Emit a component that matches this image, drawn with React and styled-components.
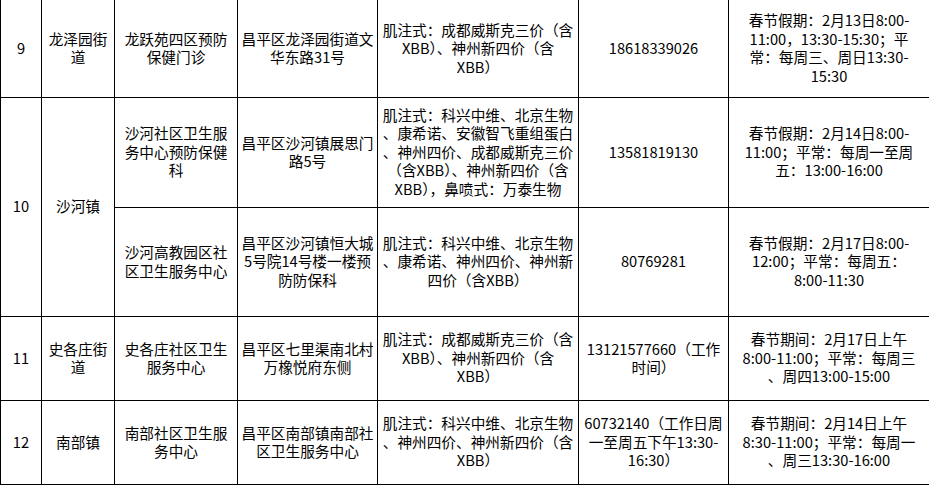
import React from 'react';
import styled, { createGlobalStyle } from "styled-components";

const GlobalStyle = createGlobalStyle`
    html, body {
        margin: 0;
        padding: 0;
        background: #fff;
    }
`;

const columns = [41, 73, 123, 140, 201, 150, 201];

// each row: number, street (with rowSpan), and the site cells
const rows = [
    {
        height: 97,
        no: "9",
        street: ["龙泽园街", "道"],
        span: 1,
        site: {
            name: ["龙跃苑四区预防", "保健门诊"],
            address: ["昌平区龙泽园街道文", "华东路31号"],
            vaccine: ["肌注式：成都威斯克三价（含", "XBB）、神州新四价（含", "XBB）"],
            phone: ["18618339026"],
            time: ["春节假期：2月13日8:00-", "11:00，13:30-15:30；平", "常：每周三、周日13:30-", "15:30"],
        },
    },
    {
        height: 110,
        no: "10",
        street: ["沙河镇"],
        span: 2,
        site: {
            name: ["沙河社区卫生服", "务中心预防保健", "科"],
            address: ["昌平区沙河镇展思门", "路5号"],
            vaccine: ["肌注式：科兴中维、北京生物", "、康希诺、安徽智飞重组蛋白", "、神州四价、成都威斯克三价", "（含XBB）、神州新四价（含", "XBB），鼻喷式：万泰生物"],
            phone: ["13581819130"],
            time: ["春节假期：2月14日8:00-", "11:00；平常：每周一至周", "五：13:00-16:00"],
        },
    },
    {
        height: 109,
        site: {
            name: ["沙河高教园区社", "区卫生服务中心"],
            address: ["昌平区沙河镇恒大城", "5号院14号楼一楼预", "防防保科"],
            vaccine: ["肌注式：科兴中维、北京生物", "、康希诺、神州四价、神州新", "四价（含XBB）"],
            phone: ["80769281"],
            time: ["春节假期：2月17日8:00-", "12:00；平常：每周五：", "8:00-11:30"],
        },
    },
    {
        height: 84,
        no: "11",
        street: ["史各庄街", "道"],
        span: 1,
        site: {
            name: ["史各庄社区卫生", "服务中心"],
            address: ["昌平区七里渠南北村", "万橡悦府东侧"],
            vaccine: ["肌注式：成都威斯克三价（含", "XBB）、神州新四价（含", "XBB）"],
            phone: ["13121577660（工作", "时间）"],
            time: ["春节期间：2月17日上午", "8:00-11:00；平常：每周三", "、周四13:00-15:00"],
        },
    },
    {
        height: 84,
        no: "12",
        street: ["南部镇"],
        span: 1,
        site: {
            name: ["南部社区卫生服", "务中心"],
            address: ["昌平区南部镇南部社", "区卫生服务中心"],
            vaccine: ["肌注式：科兴中维、北京生物", "、神州四价、神州新四价（含", "XBB）"],
            phone: ["60732140（工作日周", "一至周五下午13:30-", "16:30）"],
            time: ["春节期间：2月14日上午", "8:30-11:00；平常：每周一", "、周三13:30-16:00"],
        },
    },
];

const Lines = ({ lines }) => (
    <>
        {lines.map((line, i) => (
            <React.Fragment key={i}>
                {i > 0 && <br />}
                {line}
            </React.Fragment>
        ))}
    </>
);

const App = () => {
    return (
        <>
            <GlobalStyle />
            <Table>
                <colgroup>
                    {columns.map((w, i) => <Col key={i} $w={w} />)}
                </colgroup>
                <tbody>
                    {rows.map((row, i) => (
                        <Row key={i} $h={row.height}>
                            {row.no && (
                                <Cell rowSpan={row.span} $top={i === 0}>{row.no}</Cell>
                            )}
                            {row.street && (
                                <Cell rowSpan={row.span} $top={i === 0}><Lines lines={row.street} /></Cell>
                            )}
                            <Cell $top={i === 0}><Lines lines={row.site.name} /></Cell>
                            <Cell $top={i === 0}><Lines lines={row.site.address} /></Cell>
                            <Cell $top={i === 0}><Lines lines={row.site.vaccine} /></Cell>
                            <Cell $top={i === 0}><Lines lines={row.site.phone} /></Cell>
                            <Cell $top={i === 0}><Lines lines={row.site.time} /></Cell>
                        </Row>
                    ))}
                </tbody>
            </Table>
        </>
    );
};

const Table = styled.table`
    border-collapse: collapse;
    table-layout: fixed;
    width: 929px;
    font-family: "Noto Sans CJK SC", "Liberation Sans", sans-serif;
    font-size: 14.67px;
    line-height: 18.5px;
    color: #000;
`;

const Col = styled.col`
    width: ${(p) => p.$w}px;
`;

const Row = styled.tr`
    height: ${(p) => p.$h}px;
`;

const Cell = styled.td`
    border: 1px solid #000;
    border-top: ${(p) => (p.$top ? "none" : "1px solid #000")};
    padding: 0 1px;
    text-align: center;
    vertical-align: middle;
    white-space: nowrap;
    overflow: hidden;
`;

export default App;
